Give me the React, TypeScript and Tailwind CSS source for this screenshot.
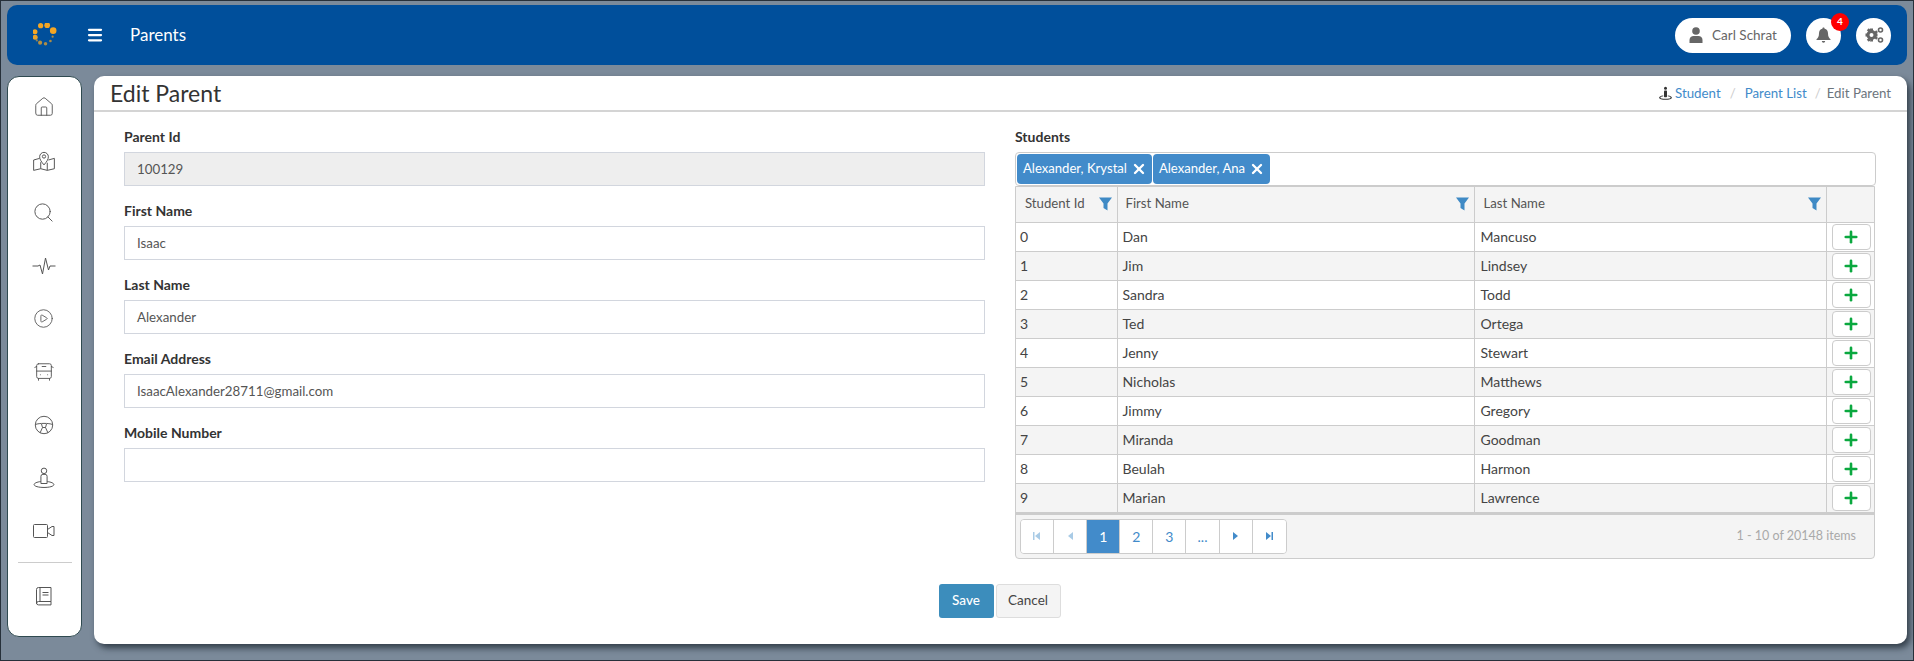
import React from "react";
import { Plus, X, Home, Search, CirclePlay, BusFront, Menu } from "lucide-react";

const rows: [string, string, string][] = [
  ["0", "Dan", "Mancuso"],
  ["1", "Jim", "Lindsey"],
  ["2", "Sandra", "Todd"],
  ["3", "Ted", "Ortega"],
  ["4", "Jenny", "Stewart"],
  ["5", "Nicholas", "Matthews"],
  ["6", "Jimmy", "Gregory"],
  ["7", "Miranda", "Goodman"],
  ["8", "Beulah", "Harmon"],
  ["9", "Marian", "Lawrence"],
];

function Funnel() {
  return (
    <svg width="13" height="14" viewBox="0 0 13 14" className="absolute right-[5px] top-[10px]">
      <path d="M0 0.500h13L8.500 6.500v7L4.500 11V6.500z" fill="#3f8ac5" />
    </svg>
  );
}

function PersonRing({ size = 20, color = "#555", fill = false }: { size?: number; color?: string; fill?: boolean }) {
  return (
    <svg width={size} height={size} viewBox="0 0 20 20" fill={fill ? color : "none"} stroke={color} strokeWidth={fill ? 0 : 0.9}>
      <circle cx="10" cy={fill ? 3 : 3.500} r={fill ? 2 : 2.500} />
      {fill ? (
        <>
          <rect x="8" y="6" width="4" height="9" rx="1" />
          <path d="M7 12.500C3 13 1.500 14.200 1.500 15.500c0 1.600 3.800 2.800 8.500 2.800s8.500-1.200 8.500-2.800c0-1.300-1.500-2.500-5.500-3v1c2.500.4 3.800 1.100 3.800 2s-3 1.600-6.800 1.600-6.800-.7-6.800-1.600 1.300-1.600 3.800-2z" />
        </>
      ) : (
        <>
          <path d="M7.200 15V8.500A1.800 1.800 0 0 1 9 6.700h2a1.800 1.800 0 0 1 1.800 1.800V15z" />
          <path d="M7 13.200C3.600 13.700 1 14.700 1 16c0 1.500 4 2.600 9 2.600s9-1.100 9-2.600c0-1.300-2.600-2.300-6-2.800" />
        </>
      )}
    </svg>
  );
}

function MapIcon() {
  return (
    <svg width="24" height="24" viewBox="0 0 22 22" fill="none" stroke="#555" strokeWidth="0.900">
      <path d="M7 9.500L1.500 11v9.500l6.500-1.500 6 1.500 6.500-1.500V9.500L15 11" />
      <path d="M8 19v-6M14 20.500v-7" />
      <path d="M11 15.500c-2.500-3-4-5-4-7.500a4 4 0 0 1 8 0c0 2.500-1.500 4.500-4 7.500z" fill="#fff" />
      <circle cx="11" cy="7.800" r="1.500" />
    </svg>
  );
}

function Pulse() {
  return (
    <svg width="24" height="20" viewBox="0 0 24 20" fill="none" stroke="#555" strokeWidth="1">
      <path d="M0.500 10H6l2 -1 2.500 9L13.500 2l3 12 1.500-4h5.500" />
    </svg>
  );
}

function Wheel() {
  return (
    <svg width="20" height="20" viewBox="0 0 20 20" fill="none" stroke="#555" strokeWidth="0.950">
      <circle cx="10" cy="10" r="8.700" />
      <path d="M1.500 9.500c3.500-1.500 13.500-1.500 17 0" />
      <path d="M7.500 9l1 3.500h3l1-3.500" />
      <path d="M8.500 12.500L6 18M11.500 12.500L14 18" />
    </svg>
  );
}

function VideoIcon() {
  return (
    <svg width="22" height="16" viewBox="0 0 22 16" fill="none" stroke="#555" strokeWidth="1">
      <rect x="0.500" y="1.500" width="14" height="13" rx="1" />
      <path d="M14.500 6.500L19 3.500h2v9h-2l-4.500-3" />
    </svg>
  );
}

function BookIcon() {
  return (
    <svg width="18" height="20" viewBox="0 0 18 20" fill="none" stroke="#555" strokeWidth="1">
      <path d="M3.500 1.500H16v14H3.500A2 2 0 0 0 1.500 17.500V3.500a2 2 0 0 1 2-2z" />
      <path d="M1.500 17a2 2 0 0 0 2 1.900H16V15.500" />
      <path d="M5 1.500v14M7.500 6.500h6M7.500 9h6" />
    </svg>
  );
}

function Logo() {
  const dots: [number, number, number, number][] = [
    [7, 2.500, 2.400, 1], [13, 2, 2.600, 1], [18.500, 7, 3, 1], [1.800, 8, 2.300, 1], [2, 13, 2.300, 0.95],
    [18, 12.500, 1, 0.7], [6.500, 18, 1.900, 0.75], [11.500, 19, 1.600, 0.7], [16, 16.500, 1.200, 0.7], [3.500, 16, 1, 0.6],
  ];
  return (
    <svg width="24" height="24" viewBox="0 0 22 22">
      {dots.map(([x, y, r, o], i) => (
        <circle key={i} cx={x} cy={y} r={r} fill="#f5a623" opacity={o} />
      ))}
    </svg>
  );
}

function Field({ label, value, disabled }: { label: string; value: string; disabled?: boolean }) {
  return (
    <div className="mb-[14px]">
      <div className="mb-[5px] h-[21px] text-[14px] font-bold leading-[21px] text-[#333]">{label}</div>
      <div
        className={`flex h-[34px] items-center border border-[#d2d6de] px-[12px] pt-[1px] text-[13.300px] text-[#555] ${
          disabled ? "bg-[#eeeeee]" : "bg-white"
        }`}
      >
        {value}
      </div>
    </div>
  );
}

function Tag({ text }: { text: string }) {
  return (
    <div className="flex h-[30px] items-center gap-[4px] rounded-[4px] bg-[#428bca] pl-[6px] pr-[5px] text-[13.100px] text-white">
      <span>{text}</span>
      <X size={16} strokeWidth={3.500} color="#fff" />
    </div>
  );
}

function PagerTri({ dir, bar, color }: { dir: "l" | "r"; bar?: boolean; color: string }) {
  return (
    <svg width="10" height="10" viewBox="0 0 10 10" fill={color}>
      {dir === "l" ? <path d="M8 1v8L3 5z" /> : <path d="M2 1v8l5-4z" />}
      {bar && (dir === "l" ? <rect x="1" y="1" width="1.500" height="8" /> : <rect x="7.500" y="1" width="1.500" height="8" />)}
    </svg>
  );
}

function PageBtn({ children, active }: { children: React.ReactNode; active?: boolean }) {
  return (
    <div
      className={`flex h-[33px] w-[33.100px] items-center justify-center border-r border-[#ccc] text-[14px] last:border-r-0 ${
        active ? "bg-[#428bca] text-white" : "bg-white text-[#428bca]"
      }`}
    >
      {children}
    </div>
  );
}

export default function App() {
  const sideIcons = [
    <Home key="a" size={22} strokeWidth={1} color="#555" />,
    <MapIcon key="b" />,
    <Search key="c" size={23} strokeWidth={1} color="#555" />,
    <Pulse key="d" />,
    <CirclePlay key="e" size={21} strokeWidth={1} color="#555" />,
    <BusFront key="f" size={22} strokeWidth={1} color="#555" />,
    <Wheel key="g" />,
    <PersonRing key="h" size={22} />,
    <VideoIcon key="i" />,
  ];
  return (
    <div className="flex h-[661px] w-[1914px] flex-col overflow-hidden border border-[#26303a] bg-[#7b8a9a] pl-[6px] pr-[6px] pt-[4px] font-['Lato','Noto_Sans',sans-serif] text-[14px] text-[#333]">
      {/* Top bar */}
      <header className="flex h-[60px] shrink-0 items-center rounded-[10px] bg-[#004f9b] pl-[26px] pr-[16px]">
        <Logo />
        <Menu size={18} strokeWidth={3} color="#fff" className="ml-[29px]" />
        <div className="ml-[26px] text-[17px] text-white">Parents</div>
        <div className="ml-auto flex items-center">
          <div className="flex h-[35px] w-[116px] items-center justify-center gap-[9px] rounded-full bg-white text-[13.500px] text-[#666]">
            <svg width="14" height="16" viewBox="0 0 14 16" fill="#666">
              <circle cx="7" cy="4" r="3.800" />
              <path d="M0.500 16v-3c0-2.500 2-4 4-4h5c2 0 4 1.500 4 4v3z" />
            </svg>
            <span>Carl Schrat</span>
          </div>
          <div className="relative ml-[15px] flex h-[35px] w-[35px] items-center justify-center rounded-full bg-white">
            <svg width="15" height="16" viewBox="0 0 15 16" fill="#666">
              <path d="M7.500 0.500c.7 0 1.100.5 1.100 1.200 2.200.5 3.400 2.200 3.400 4.500 0 3.500 1 4.700 2.500 6v.8H0.500v-.8c1.500-1.300 2.500-2.500 2.500-6 0-2.300 1.200-4 3.400-4.500 0-.7.400-1.200 1.100-1.200z" />
              <path d="M5.800 14h3.400a1.700 1.700 0 0 1-3.400 0z" />
            </svg>
            <span className="absolute right-[-8px] top-[-5px] flex h-[18px] w-[18px] items-center justify-center rounded-full bg-[#f00] text-[10px] font-bold text-white">
              4
            </span>
          </div>
          <div className="ml-[15px] flex h-[35px] w-[35px] items-center justify-center rounded-full bg-white">
            <svg width="20" height="18" viewBox="0 0 20 18" fill="#666">
              <circle cx="7.500" cy="9" r="3.500" fill="none" stroke="#666" strokeWidth="3" />
              <path d="M6 2.500h3v3H6zM6 12.500h3v3H6zM1.500 7.500h3v3h-3zM10.500 7.500h3v3h-3zM2.800 4.200l2-2 1.800 1.800-2 2zM10.200 11.800l2 2 1.800-1.800-2-2zM2.800 13.800l2 2 1.800-1.800-2-2zM10.200 6.200l2-2L14 6l-2 2z" />
              <circle cx="16.500" cy="4" r="2" fill="none" stroke="#666" strokeWidth="1.600" />
              <circle cx="16.500" cy="14" r="2" fill="none" stroke="#666" strokeWidth="1.600" />
            </svg>
          </div>
        </div>
      </header>

      <div className="mt-[11px] flex items-start gap-[12px]">
        {/* Sidebar */}
        <aside className="flex h-[561px] w-[75px] shrink-0 flex-col items-center rounded-[12px] border border-[#2f4a50] bg-white pt-[3px]">
          {sideIcons.map((ic, i) => (
            <div key={i} className="flex h-[53px] w-full items-center justify-center pr-[2px]">
              {ic}
            </div>
          ))}
          <div className="mt-[5px] h-px w-[54px] bg-[#ccc]" />
          <div className="mt-[13px] flex h-[40px] w-full items-center justify-center pr-[2px]">
            <BookIcon />
          </div>
        </aside>

        {/* Content */}
        <main className="h-[568px] min-w-0 flex-1 rounded-[10px] bg-white shadow-[3px_4px_6px_rgba(20,30,40,0.7)]">
          <div className="flex h-[36px] items-center justify-between border-b-2 border-[#d4d4d4] pl-[16px] pr-[16px]">
            <h1 className="text-[23px] font-normal leading-none text-[#333]">Edit Parent</h1>
            <nav className="flex items-center pt-[1px] text-[13.300px] text-[#428bca]">
              <PersonRing size={15} color="#333" fill />
              <span className="ml-[2px]">Student</span>
              <span className="mx-[9px] text-[#ccc]">/</span>
              <span>Parent List</span>
              <span className="ml-[8px] mr-[6px] text-[#ccc]">/</span>
              <span className="text-[#6c757d]">Edit Parent</span>
            </nav>
          </div>

          <div className="flex gap-[30px] pl-[30px] pt-[14px]">
            <div className="w-[861px]">
              <Field label="Parent Id" value="100129" disabled />
              <Field label="First Name" value="Isaac" />
              <Field label="Last Name" value="Alexander" />
              <Field label="Email Address" value="IsaacAlexander28711@gmail.com" />
              <Field label="Mobile Number" value="" />
            </div>

            <div className="w-[861px]">
              <div className="mb-[5px] h-[21px] text-[14px] font-bold leading-[21px] text-[#333]">Students</div>
              <div className="flex h-[34px] items-center gap-[1px] rounded-[4px] border border-[#ccc] px-[1px]">
                <Tag text="Alexander, Krystal" />
                <Tag text="Alexander, Ana" />
              </div>
              <div className="w-[860px] overflow-hidden rounded-b-[4px] border border-[#ccc] bg-[#f4f4f4]">
                <table className="w-full table-fixed border-collapse text-[14px]">
                  <colgroup>
                    <col className="w-[101px]" />
                    <col className="w-[357px]" />
                    <col className="w-[352px]" />
                    <col />
                  </colgroup>
                  <thead>
                    <tr className="h-[35px] border-b border-[#ccc] bg-[#f4f4f4] text-left text-[13.200px] text-[#555]">
                      <th className="relative border-r border-[#ccc] pl-[9px] font-normal">
                        Student Id
                        <Funnel />
                      </th>
                      <th className="relative border-r border-[#ccc] pl-[8px] font-normal">
                        First Name
                        <Funnel />
                      </th>
                      <th className="relative border-r border-[#ccc] pl-[9px] font-normal">
                        Last Name
                        <Funnel />
                      </th>
                      <th />
                    </tr>
                  </thead>
                  <tbody>
                    {rows.map((r, i) => (
                      <tr key={r[0]} className={`h-[29px] border-b border-[#ccc] ${i % 2 ? "bg-[#f4f4f4]" : "bg-white"}`}>
                        <td className="border-r border-[#ccc] pl-[4px] text-[#444]">{r[0]}</td>
                        <td className="border-r border-[#ccc] pl-[5px] text-[#444]">{r[1]}</td>
                        <td className="border-r border-[#ccc] pl-[6px] text-[#444]">{r[2]}</td>
                        <td className="p-0">
                          <div className="ml-[5px] flex h-[26px] w-[39px] items-center justify-center rounded-[4px] border border-[#ccc] bg-white">
                            <Plus size={18} strokeWidth={3.500} color="#0aa83f" />
                          </div>
                        </td>
                      </tr>
                    ))}
                  </tbody>
                </table>
                <div className="flex h-[45px] items-center justify-between border-t-2 border-[#ccc] pl-[4px] pr-[18px]">
                  <div className="flex overflow-hidden rounded-[4px] border border-[#ccc]">
                    <PageBtn><PagerTri dir="l" bar color="#a9cbe6" /></PageBtn>
                    <PageBtn><PagerTri dir="l" color="#a9cbe6" /></PageBtn>
                    <PageBtn active>1</PageBtn>
                    <PageBtn>2</PageBtn>
                    <PageBtn>3</PageBtn>
                    <PageBtn>...</PageBtn>
                    <PageBtn><PagerTri dir="r" color="#428bca" /></PageBtn>
                    <PageBtn><PagerTri dir="r" bar color="#428bca" /></PageBtn>
                  </div>
                  <div className="text-[12.500px] text-[#a9a9a9]">1 - 10 of 20148 items</div>
                </div>
              </div>
            </div>
          </div>

          <div className="mt-[25px] flex justify-center gap-[2px] pr-[2px]">
            <button className="h-[34px] w-[55px] rounded-[3px] bg-[#3c8dbc] text-[13.500px] font-medium text-white">Save</button>
            <button className="h-[34px] w-[65px] rounded-[3px] border border-[#ddd] bg-[#f4f4f4] text-[13.500px] text-[#444]">Cancel</button>
          </div>
        </main>
      </div>
    </div>
  );
}
